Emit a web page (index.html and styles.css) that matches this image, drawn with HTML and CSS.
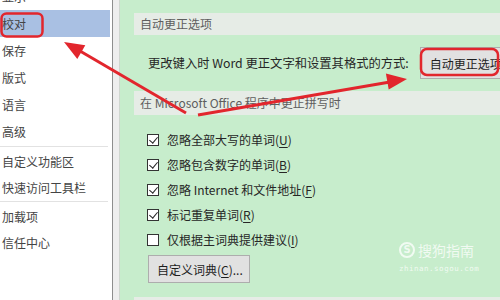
FILE: index.html
```html
<!DOCTYPE html>
<html lang="zh-CN">
<head>
<meta charset="utf-8">
<link rel="stylesheet" href="styles.css">
</head>
<body>
<div class="app">
  <nav class="sidebar">
    <ul class="nav-group first">
      <li class="nav-item">显示</li>
      <li class="nav-item active">校对</li>
      <li class="nav-item">保存</li>
      <li class="nav-item">版式</li>
      <li class="nav-item">语言</li>
      <li class="nav-item">高级</li>
    </ul>
    <ul class="nav-group">
      <li class="nav-item">自定义功能区</li>
      <li class="nav-item">快速访问工具栏</li>
    </ul>
    <ul class="nav-group">
      <li class="nav-item">加载项</li>
      <li class="nav-item">信任中心</li>
    </ul>
  </nav>
  <div class="splitter"></div>
  <main class="main">
    <div class="section-head">自动更正选项</div>
    <div class="autocorrect-row">
      <span class="label-wide">更改键入时 Word 更正文字和设置其格式的方式:</span>
      <span class="btn btn-autocorrect">自动更正选项(A)...</span>
    </div>
    <div class="section-head second">在 Microsoft Office 程序中更正拼写时</div>
    <ul class="checks">
      <li class="check-row"><span class="box checked"></span><span>忽略全部大写的单词(<u>U</u>)</span></li>
      <li class="check-row"><span class="box checked"></span><span>忽略包含数字的单词(<u>B</u>)</span></li>
      <li class="check-row"><span class="box checked"></span><span>忽略 Internet 和文件地址(<u>F</u>)</span></li>
      <li class="check-row"><span class="box checked"></span><span>标记重复单词(<u>R</u>)</span></li>
      <li class="check-row"><span class="box"></span><span>仅根据主词典提供建议(<u>I</u>)</span></li>
    </ul>
    <div class="dict-row"><span class="btn btn-dict">自定义词典(<u>C</u>)...</span></div>
    <div class="section-head third"></div>
  </main>
</div>

<div class="watermark">
  <div class="wm-top"><span class="wm-logo">S</span><span class="wm-name">搜狗指南</span></div>
  <div class="wm-url">zhinan.sogou.com</div>
</div>

<svg class="annot" width="500" height="300" viewBox="0 0 500 300">
  <rect x="1.5" y="13.5" width="41" height="23" rx="5" fill="none" stroke="#e2262d" stroke-width="2.5"/>
  <rect x="421" y="49" width="77" height="26" rx="6" fill="none" stroke="#e2262d" stroke-width="2.5"/>
  <line x1="186" y1="113" x2="80" y2="51" stroke="#e2262d" stroke-width="3"/>
  <polygon points="64,42 85.3,45.2 77.3,59" fill="#e2262d"/>
  <line x1="198" y1="115" x2="390" y2="82" stroke="#e2262d" stroke-width="3"/>
  <polygon points="407,79 388.7,89.4 385.9,73.6" fill="#e2262d"/>
</svg>
</body>
</html>
```

FILE: styles.css
```css
* { box-sizing: border-box; }
html, body {
  margin: 0;
  padding: 0;
}
body {
  width: 500px;
  height: 300px;
  overflow: hidden;
  position: relative;
  font-family: "Noto Sans CJK SC", "Noto Sans", sans-serif;
  font-size: 12px;
  color: #262626;
}
ul { list-style: none; margin: 0; padding: 0; }
u { text-decoration: underline; text-underline-offset: 2px; }

.app {
  display: flex;
  height: 300px;
}

.sidebar {
  width: 112px;
  flex: none;
  background: #ffffff;
  color: #444;
  font-size: 12px;
}
.nav-group {
  border-top: 1px solid #e2e2e2;
  margin-top: 0;
  padding-top: 2px;
  margin-right: 4px;
}
.nav-group.first {
  border-top: none;
  margin-top: -17px;
  padding-top: 0;
  margin-right: 0;
  padding-bottom: 1px;
}
.nav-item {
  height: 27px;
  line-height: 27px;
  padding-left: 2px;
  white-space: nowrap;
}
.nav-group:not(.first) .nav-item {
  height: 26px;
  line-height: 26px;
}
.nav-item.active {
  background: #a9c0e3;
  margin-right: 2px;
}

.splitter {
  width: 8px;
  flex: none;
  border-left: 1px solid #8e8e8e;
  border-right: 1px solid #cfd6cf;
  background: #eeeeee;
}

.main {
  flex: 1;
  background: #c7edcc;
  padding-top: 13px;
  padding-left: 14px;
  overflow: hidden;
  white-space: nowrap;
}
.section-head {
  height: 22px;
  line-height: 22px;
  background: #e6ece6;
  color: #5e5e5e;
  padding-left: 6px;
  font-size: 12px;
}
.section-head.second {
  margin-top: 12px;
  height: 24px;
  line-height: 24px;
}
.section-head.third {
  margin-top: 14px;
}

.autocorrect-row {
  display: flex;
  align-items: center;
  margin-top: 12px;
  height: 32px;
  padding-left: 14px;
}
.label-wide {
  font-size: 12.3px;
}
.btn {
  display: inline-flex;
  align-items: center;
  background: #e1e1e1;
  border: 1px solid #adadad;
  color: #1e1e1e;
  font-size: 12px;
}
.btn-autocorrect {
  margin-left: 11px;
  height: 32px;
  padding: 0 9px;
  flex: none;
}

.checks {
  margin-top: 12px;
  padding-left: 13px;
}
.check-row {
  display: flex;
  align-items: center;
  height: 25px;
  gap: 8px;
}
.box {
  width: 12px;
  height: 12px;
  border: 1px solid #333;
  background: #ffffff;
  flex: none;
  position: relative;
}
.box.checked::after {
  content: "";
  position: absolute;
  left: 3px;
  top: 0px;
  width: 4px;
  height: 7px;
  border-right: 1.5px solid #222;
  border-bottom: 1.5px solid #222;
  transform: rotate(40deg);
}

.dict-row {
  margin-top: 3px;
  padding-left: 14px;
}
.btn-dict {
  height: 28px;
  width: 102px;
  padding-left: 8px;
}

.watermark {
  position: absolute;
  left: 399px;
  top: 241px;
  color: rgba(255, 255, 255, 0.75);
}
.wm-top {
  display: flex;
  align-items: center;
  gap: 3px;
}
.wm-logo {
  width: 16px;
  height: 16px;
  border: 2px solid rgba(255, 255, 255, 0.75);
  border-radius: 50%;
  font-family: "DejaVu Sans", sans-serif;
  font-weight: bold;
  font-size: 10px;
  line-height: 12px;
  text-align: center;
}
.wm-name {
  font-size: 14px;
  line-height: 18px;
}
.wm-url {
  font-family: "DejaVu Sans Mono", monospace;
  font-size: 7.5px;
  letter-spacing: 0.5px;
  margin-top: 5px;
}

.annot {
  position: absolute;
  left: 0;
  top: 0;
  pointer-events: none;
}
```
